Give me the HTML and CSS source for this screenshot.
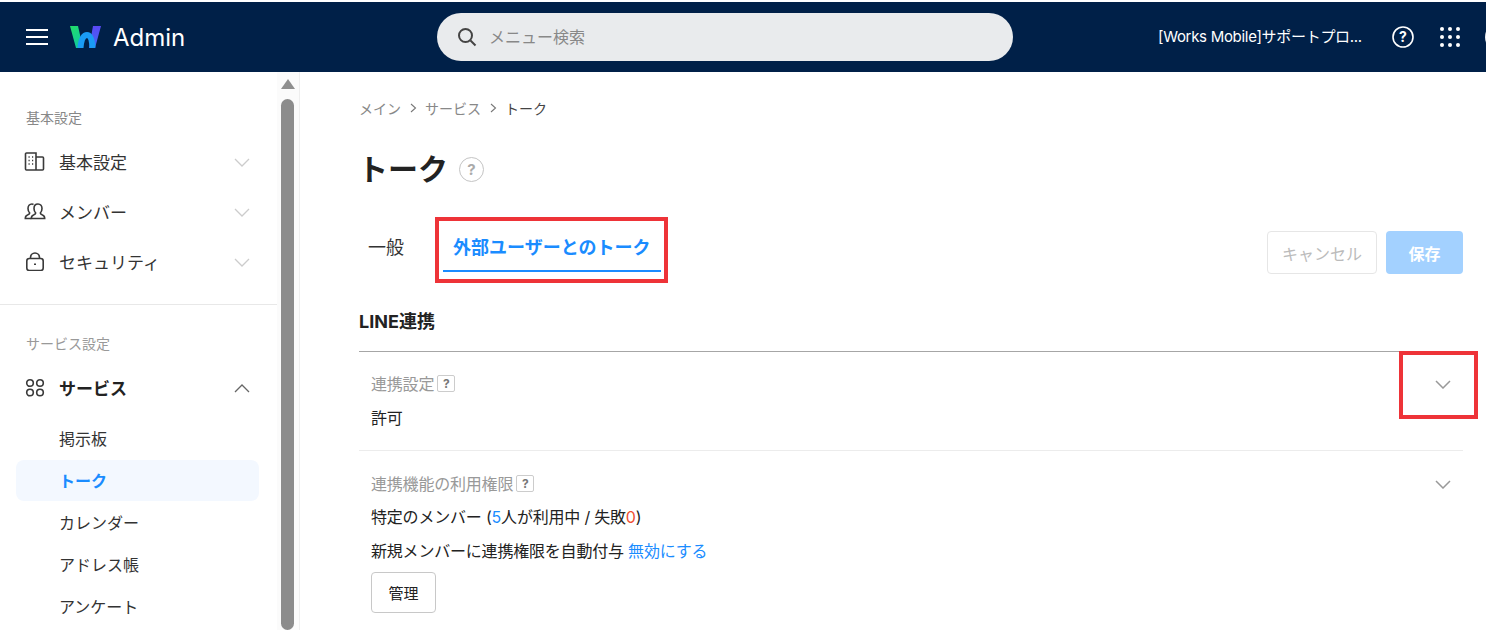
FILE: index.html
```html
<!DOCTYPE html>
<html lang="ja">
<head>
    <meta charset="UTF-8">
    <title>Admin トーク</title>
    <link rel="stylesheet" href="styles.css">
</head>
<body>

<header class="header">
    <div class="header-left">
        <svg class="menu-icon" width="22" height="16" viewBox="0 0 22 16"><path d="M0 1h22M0 8h22M0 15h22" stroke="#fff" stroke-width="2"/></svg>
        <svg class="logo" width="31" height="22" viewBox="0 0 31 22">
            <defs>
                <linearGradient id="logoGreen" x1="0" y1="0" x2="0.6" y2="1"><stop offset="0" stop-color="#22dd66"/><stop offset="1" stop-color="#10c8a0"/></linearGradient>
                <linearGradient id="logoPurple" x1="0" y1="0" x2="0" y2="1"><stop offset="0" stop-color="#5a48f5"/><stop offset="1" stop-color="#3f6cf5"/></linearGradient>
            </defs>
            <path d="M0 0h8l5 22H6z" fill="url(#logoGreen)"/>
            <path d="M23 0h8l-6 22h-6z" fill="url(#logoPurple)"/>
            <path d="M10.500 22c.8-9 3-13 6.500-13s5 4 5.500 13" fill="none" stroke="#1a9cf5" stroke-width="6"/>
        </svg>
        <span class="admin-title">Admin</span>
    </div>
    <div class="search">
        <svg width="20" height="20" viewBox="0 0 20 20"><circle cx="8.500" cy="8.500" r="6.500" fill="none" stroke="#444" stroke-width="2"/><path d="M13.500 13.500l5 5" stroke="#444" stroke-width="2"/></svg>
        <span class="search-text">メニュー検索</span>
    </div>
    <div class="header-right">
        <span class="company">[Works Mobile]サポートプロ...</span>
        <svg class="help-icon" width="22" height="22" viewBox="0 0 22 22"><circle cx="11" cy="11" r="10" fill="none" stroke="#fff" stroke-width="1.600"/><text x="11" y="16" text-anchor="middle" class="help-mark">?</text></svg>
        <svg class="apps-icon" width="22" height="22" viewBox="0 0 22 22" fill="#fff">
            <circle cx="3" cy="3" r="2"/><circle cx="11" cy="3" r="2"/><circle cx="19" cy="3" r="2"/>
            <circle cx="3" cy="11" r="2"/><circle cx="11" cy="11" r="2"/><circle cx="19" cy="11" r="2"/>
            <circle cx="3" cy="19" r="2"/><circle cx="11" cy="19" r="2"/><circle cx="19" cy="19" r="2"/>
        </svg>
        <span class="avatar"></span>
    </div>
</header>

<div class="layout">
    <aside class="sidebar">
        <nav class="side-nav">
            <div class="side-group">
                <div class="side-label">基本設定</div>
                <div class="side-item">
                    <svg width="22" height="20" viewBox="0 0 22 20" fill="none" stroke="#3a3a3a" stroke-width="1.600"><path d="M2.500 2h9.500v17H2.500a1 1 0 0 1-1-1V3a1 1 0 0 1 1-1zM12 6h6.500a1 1 0 0 1 1 1v11a1 1 0 0 1-1 1H12"/><path d="M4.500 6h1.200M8 6h1.200M4.500 9.500h1.200M8 9.500h1.200M4.500 13h1.200M8 13h1.200" stroke-width="1.400"/></svg>
                    <span>基本設定</span>
                    <svg class="chev" width="16" height="9" viewBox="0 0 16 9"><path d="M1 1l7 7 7-7" fill="none" stroke="#ccc" stroke-width="1.300"/></svg>
                </div>
                <div class="side-item">
                    <svg width="22" height="20" viewBox="0 0 22 20" fill="none" stroke="#3a3a3a" stroke-width="1.600"><g transform="translate(0 1)"><path d="M14 2c-2.500 0-4 2-4 4.500 0 2 .7 3.500 1.700 4.500 0 1-.8 1.400-2.200 2-1.500.6-2.200 1.300-2.200 3.500h13.400c0-2.200-.7-2.900-2.200-3.500-1.400-.6-2.200-1-2.200-2 1-1 1.700-2.500 1.700-4.500C18 4 16.500 2 14 2z"/><path d="M9.500 2.500C9 2.200 8.500 2 8 2 5.500 2 4 4 4 6.500c0 2 .7 3.500 1.700 4.500 0 1-.8 1.400-2.200 2-1.500.6-2.200 1.300-2.200 3.500h6"/></g></svg>
                    <span>メンバー</span>
                    <svg class="chev" width="16" height="9" viewBox="0 0 16 9"><path d="M1 1l7 7 7-7" fill="none" stroke="#ccc" stroke-width="1.300"/></svg>
                </div>
                <div class="side-item">
                    <svg width="22" height="20" viewBox="0 0 22 20" fill="none" stroke="#3a3a3a" stroke-width="1.600"><rect x="2.800" y="7.500" width="16.400" height="12" rx="2.500"/><path d="M6.500 7.500V6.500a4.500 4.500 0 0 1 9 0v1"/><path d="M11 12.500v1.500" stroke-width="2"/></svg>
                    <span>セキュリティ</span>
                    <svg class="chev" width="16" height="9" viewBox="0 0 16 9"><path d="M1 1l7 7 7-7" fill="none" stroke="#ccc" stroke-width="1.300"/></svg>
                </div>
            </div>
            <div class="side-group side-group-services">
                <div class="side-label">サービス設定</div>
                <div class="side-item side-item-open">
                    <svg width="22" height="20" viewBox="0 0 22 20" fill="none" stroke="#3a3a3a" stroke-width="1.600"><circle cx="6" cy="6" r="3.300"/><circle cx="16" cy="6" r="3.300"/><circle cx="6" cy="15.500" r="3.300"/><circle cx="16" cy="15.500" r="3.300"/></svg>
                    <span>サービス</span>
                    <svg class="chev" width="16" height="9" viewBox="0 0 16 9"><path d="M1 8l7-7 7 7" fill="none" stroke="#666" stroke-width="1.300"/></svg>
                </div>
                <a class="side-sub">掲示板</a>
                <a class="side-sub side-sub-active">トーク</a>
                <a class="side-sub">カレンダー</a>
                <a class="side-sub">アドレス帳</a>
                <a class="side-sub">アンケート</a>
            </div>
        </nav>
        <div class="scrollbar">
            <span class="scroll-arrow"></span>
            <span class="scroll-thumb"></span>
        </div>
    </aside>

    <main class="main">
        <div class="breadcrumb">
            <span>メイン</span>
            <svg width="7" height="10" viewBox="0 0 7 10"><path d="M1 1l4.500 4L1 9" fill="none" stroke="#777" stroke-width="1.100"/></svg>
            <span>サービス</span>
            <svg width="7" height="10" viewBox="0 0 7 10"><path d="M1 1l4.500 4L1 9" fill="none" stroke="#777" stroke-width="1.100"/></svg>
            <span class="breadcrumb-current">トーク</span>
        </div>

        <div class="page-title">
            <h1>トーク</h1>
            <span class="title-help">?</span>
        </div>

        <div class="tab-row">
            <div class="tabs">
                <span class="tab">一般</span>
                <span class="tab tab-active">外部ユーザーとのトーク</span>
            </div>
            <div class="actions">
                <button class="btn-cancel">キャンセル</button>
                <button class="btn-save">保存</button>
            </div>
        </div>

        <h2 class="section-title">LINE連携</h2>

        <div class="setting">
            <div class="setting-label">連携設定 <span class="mini-help">?</span></div>
            <svg class="setting-chev" width="16" height="9" viewBox="0 0 16 9"><path d="M1 1l7 7 7-7" fill="none" stroke="#999" stroke-width="1.500"/></svg>
            <div class="setting-value">許可</div>
        </div>

        <div class="setting setting-second">
            <div class="setting-label">連携機能の利用権限 <span class="mini-help">?</span></div>
            <svg class="setting-chev" width="16" height="9" viewBox="0 0 16 9"><path d="M1 1l7 7 7-7" fill="none" stroke="#999" stroke-width="1.500"/></svg>
            <div class="setting-value">特定のメンバー (<span class="num-blue">5</span>人が利用中 / 失敗<span class="num-red">0</span>)</div>
            <div class="setting-value">新規メンバーに連携権限を自動付与 <a class="link">無効にする</a></div>
            <button class="btn-manage">管理</button>
        </div>
    </main>
</div>

<!-- red annotation boxes -->
<div class="mark mark-tab"></div>
<div class="mark mark-chev"></div>

</body>
</html>
```

FILE: styles.css
```css
html, body {
    margin: 0;
    height: 630px;
    overflow: hidden;
}
body {
    position: relative;
    padding-top: 2px;
    box-sizing: border-box;
    background: #fff;
    color: #222;
    font-family: "Inter", "Noto Sans CJK JP", sans-serif;
    font-size: 16px;
}
.header {
    display: flex;
    align-items: center;
    height: 70px;
    background: #002048;
    color: #fff;
}
.header-left {
    display: flex;
    flex: none;
    align-items: center;
    width: 437px;
    padding-left: 26px;
    box-sizing: border-box;
}
.logo {
    margin-left: 22px;
}
.admin-title {
    margin-left: 12px;
    font-size: 24px;
    font-family: "Inter", sans-serif;
}
.search {
    display: flex;
    flex: none;
    align-items: center;
    gap: 12px;
    width: 576px;
    height: 48px;
    padding-left: 20px;
    box-sizing: border-box;
    border-radius: 24px;
    background: #e9ebed;
    color: #888;
    font-size: 16px;
}
.search-text {
    margin-bottom: 2px;
}
.header-right {
    display: flex;
    flex: none;
    align-items: center;
    margin-left: 145px;
}
.company {
    margin-bottom: 3px;
    font-size: 15px;
    white-space: nowrap;
    letter-spacing: -0.3px;
}
.help-mark {
    fill: #fff;
    font-size: 14px;
    font-weight: 700;
    font-family: "Inter", sans-serif;
}
.help-icon {
    margin-left: 30px;
}
.apps-icon {
    margin-left: 25px;
}
.avatar {
    width: 30px;
    height: 30px;
    margin-left: 24px;
    border-radius: 50%;
    background: #f1f1f1;
    flex: none;
}
.layout {
    display: flex;
    height: 558px;
}
.sidebar {
    display: flex;
    flex: none;
    width: 300px;
    box-sizing: border-box;
    border-right: 1px solid #eee;
}
.side-nav {
    width: 277px;
    flex: none;
}
.side-group {
    padding: 36px 0 18px;
}
.side-group-services {
    padding-top: 29px;
    border-top: 1px solid #e8e8e8;
}
.side-label {
    height: 20px;
    padding-left: 26px;
    font-size: 14px;
    line-height: 20px;
    color: #888;
}
.side-group-services .side-label {
    color: #999;
}
.side-item {
    display: flex;
    align-items: center;
    height: 50px;
    padding-left: 24px;
    font-size: 17px;
    color: #333;
}
.side-label + .side-item {
    margin-top: 8px;
}
.side-item span {
    margin-left: 13px;
}
.side-item .chev {
    margin-left: auto;
    margin-right: 27px;
    margin-top: 2px;
}
.side-item-open {
    font-weight: 700;
    color: #222;
}
.side-sub {
    display: block;
    height: 41px;
    margin: 0 18px 1px 16px;
    padding-left: 43px;
    font-size: 16px;
    line-height: 42px;
    color: #333;
}
.side-item-open + .side-sub {
    margin-top: 6px;
}
.side-sub-active {
    border-radius: 8px;
    background: #f3f8ff;
    color: #1a8cff;
    font-weight: 700;
}
.scrollbar {
    flex: 1;
    display: flex;
    flex-direction: column;
    align-items: center;
    padding-right: 1px;
    background: #fbfbfb;
}
.scroll-arrow {
    margin-top: 7px;
    border-left: 7px solid transparent;
    border-right: 7px solid transparent;
    border-bottom: 10px solid #8f8f8f;
}
.scroll-thumb {
    width: 13px;
    height: 560px;
    margin-top: 10px;
    border-radius: 7px;
    background: #8c8c8c;
}
.main {
    flex: 1;
    padding: 26px 23px 0 59px;
    min-width: 0;
}
.breadcrumb {
    display: flex;
    align-items: center;
    gap: 8.5px;
    height: 20px;
    font-size: 14px;
    color: #888;
}
.breadcrumb-current {
    color: #444;
}
.page-title {
    display: flex;
    align-items: center;
    gap: 11px;
    margin-top: 25px;
    height: 48px;
}
.page-title h1 {
    margin: 0 0 0 -1px;
    font-size: 30px;
    font-weight: 700;
    color: #222;
}
.title-help {
    display: flex;
    align-items: center;
    justify-content: center;
    width: 23px;
    height: 23px;
    margin-top: 4px;
    border: 1.500px solid #c4c4c4;
    border-radius: 50%;
    font-size: 15px;
    font-weight: 700;
    color: #aaa;
}
.tab-row {
    display: flex;
    justify-content: space-between;
    align-items: flex-start;
    margin-top: 33px;
}
.tabs {
    display: flex;
    gap: 30px;
}
.tab {
    height: 48px;
    padding: 0 9px;
    font-size: 18px;
    line-height: 48px;
    color: #333;
}
.tab-active {
    box-sizing: border-box;
    padding: 0 11px 0 10px;
    border-bottom: 2px solid #1a8cff;
    color: #1a8cff;
    font-weight: 700;
}
.actions {
    display: flex;
    gap: 9px;
    margin-top: 7px;
}
.actions button {
    height: 43px;
    border-radius: 4px;
    font-family: inherit;
    font-size: 16px;
}
.btn-cancel {
    width: 110px;
    border: 1px solid #e6e6e6;
    background: #fff;
    color: #bbb;
}
.btn-save {
    width: 77px;
    border: none;
    background: #a3d1ff;
    color: #fff;
    font-weight: 700;
}
.section-title {
    margin: 35px 0 0;
    padding-bottom: 16px;
    border-bottom: 1px solid #a6a6a6;
    font-size: 18px;
    line-height: 26px;
    font-weight: 700;
    color: #222;
}
.setting {
    position: relative;
    height: 99px;
    padding: 20px 12px 0;
    box-sizing: border-box;
    border-bottom: 1px solid #ececec;
    letter-spacing: -0.2px;
}
.setting-second {
    padding-top: 21px;
    border-bottom: none;
}
.setting-label {
    display: flex;
    align-items: center;
    gap: 3px;
    height: 22px;
    font-size: 16px;
    color: #999;
}
.mini-help {
    display: flex;
    align-items: center;
    justify-content: center;
    width: 16px;
    height: 15px;
    border: 1px solid #ccc;
    border-radius: 2px;
    font-size: 12px;
    font-weight: 700;
    color: #777;
}
.setting-chev {
    position: absolute;
    top: 28px;
    right: 12px;
}
.setting-second .setting-chev {
    top: 29px;
}
.setting-value {
    margin-top: 13px;
    font-size: 16px;
    line-height: 22px;
    color: #222;
}
.setting-second .setting-value {
    margin-top: 12px;
}
.num-blue, .link {
    color: #1a8cff;
}
.num-red {
    color: #f04e30;
}
.btn-manage {
    display: block;
    width: 65px;
    height: 41px;
    margin-top: 10px;
    border: 1px solid #c8c8c8;
    border-radius: 4px;
    background: #fff;
    font-family: inherit;
    font-size: 15px;
    color: #222;
}
.mark {
    position: absolute;
    box-sizing: border-box;
    border: 4px solid #ee3338;
}
.mark-tab {
    left: 435px;
    top: 217px;
    width: 233px;
    height: 66px;
}
.mark-chev {
    left: 1399px;
    top: 351px;
    width: 79px;
    height: 68px;
}
```
